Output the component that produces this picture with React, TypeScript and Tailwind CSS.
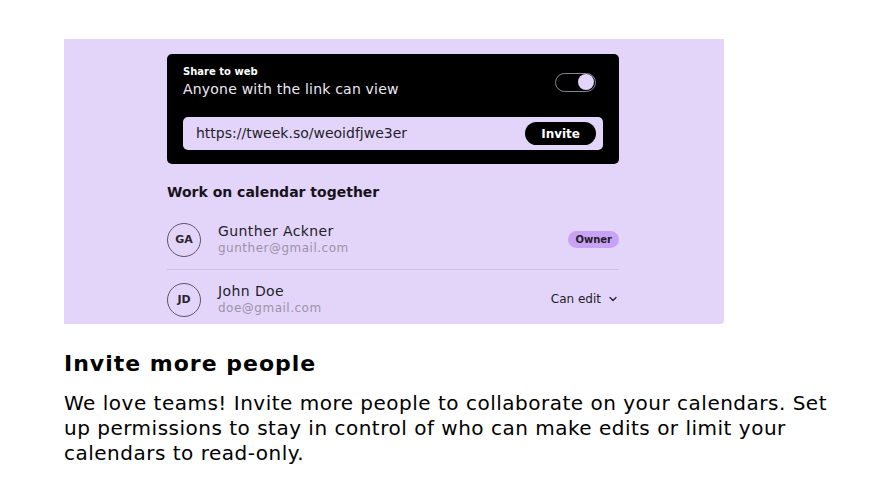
import { ChevronDown } from 'lucide-react';

const font = { fontFamily: '"DejaVu Sans", Inter, sans-serif' };

function Member({ initials, name, email, right }: { initials: string; name: string; email: string; right: React.ReactNode }) {
  return (
    <div className="flex items-start h-[59px] pt-[13px]">
      <div className="w-[34px] h-[34px] rounded-full border border-[#5b5563] flex items-center justify-center text-[11px] font-semibold text-[#2a2530]">
        {initials}
      </div>
      <div className="ml-[17px] flex flex-col">
        <span className="text-[14px] leading-[17px] tracking-[0.4px] text-[#231e29]">{name}</span>
        <span className="text-[12px] leading-[16px] tracking-[0.5px] text-[#9c92aa]">{email}</span>
      </div>
      <div className="ml-auto mt-[8px]">{right}</div>
    </div>
  );
}

export default function App() {
  return (
    <div className="w-[890px] h-[500px] bg-white" style={font}>
      <div className="pt-[39px] pl-[64px]">
        <div className="w-[660px] h-[285px] bg-[#e3d5f9] rounded-br-[4px] pl-[103px] pt-[15px]">
          <div className="w-[452px]">
            <div className="bg-black rounded-[5px] px-[16px] pt-[12px] pb-[14px]">
              <div className="flex items-center justify-between">
                <div className="flex flex-col">
                  <span className="text-[10px] leading-[12px] font-bold text-white">Share to web</span>
                  <span className="text-[14px] leading-[18px] tracking-[0.2px] text-[#eee9f5] mt-[2px]">Anyone with the link can view</span>
                </div>
                <div className="w-[41px] h-[19px] rounded-full border-[1.5px] border-[#8b8590] flex items-center justify-end pr-[1px] mr-[7px]">
                  <div className="w-[16px] h-[16px] rounded-full bg-[#e3d5f9]" />
                </div>
              </div>
              <div className="mt-[19px] h-[33px] rounded-[5px] bg-[#e3d5f9] flex items-center pl-[13px] pr-[7px]">
                <span className="text-[14px] text-[#231e29]">https://tweek.so/weoidfjwe3er</span>
                <button className="ml-auto h-[23px] px-[16px] rounded-full bg-black text-white text-[12px] font-bold">Invite</button>
              </div>
            </div>
            <div className="mt-[19px] text-[14px] leading-[18px] font-bold text-[#17131b]">Work on calendar together</div>
            <div className="mt-[9px]">
              <Member
                initials="GA"
                name="Gunther Ackner"
                email="gunther@gmail.com"
                right={<span className="block px-[7px] py-[1px] rounded-full bg-[#c8a3f5] text-[10px] font-bold text-[#231e29]">Owner</span>}
              />
              <div className="h-px bg-[#cdc0e0]" />
              <Member
                initials="JD"
                name="John Doe"
                email="doe@gmail.com"
                right={
                  <span className="flex items-center gap-[6px] text-[12px] leading-[16px] text-[#231e29]">
                    Can edit <ChevronDown className="w-[12px] h-[12px]" strokeWidth={2.5} />
                  </span>
                }
              />
            </div>
          </div>
        </div>
      </div>
      <div className="pl-[64px] pt-[26px]">
        <h2 className="text-[22px] leading-[28px] tracking-[1px] font-bold text-black">Invite more people</h2>
        <p className="mt-[13px] w-[775px] text-[20px] leading-[25px] tracking-[0.5px] text-black">
          We love teams! Invite more people to collaborate on your calendars. Set up permissions to stay in control of who can make edits or limit your calendars to read-only.
        </p>
      </div>
    </div>
  );
}
